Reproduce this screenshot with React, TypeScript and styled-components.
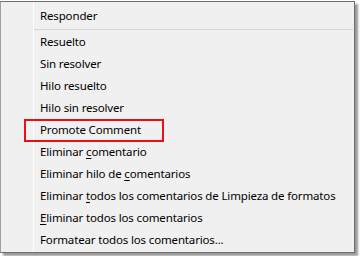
import React from "react";
import styled, { createGlobalStyle } from "styled-components";

const Global = createGlobalStyle`
  html, body { margin: 0; padding: 0; background: #ffffff; }
  body { width: 360px; height: 256px; overflow: hidden; }
`;

const Page = styled.div`
  width: 360px;
  height: 256px;
  padding-top: 1px;
  box-sizing: border-box;
  background: #ffffff;
`;

const Menu = styled.div`
  position: relative;
  width: 355px;
  height: 252px;
  box-sizing: border-box;
  border: 1px solid #6e6e6e;
  border-left-color: #a0a0a0;
  background: linear-gradient(
    to right,
    #f0f0f0 32px,
    #fdfdfd 32px,
    #fdfdfd 33px,
    #f0f0f0 33px
  );
  box-shadow: 3px 3px 2px rgba(0, 0, 0, 0.4);
  padding: 3px 0 1px 0;
  display: flex;
  flex-direction: column;
  font-family: "Segoe UI", "Noto Sans", sans-serif;
  font-size: 11.5px;
  letter-spacing: -0.15px;
  color: #000000;
`;

const Item = styled.div`
  position: relative;
  height: 22px;
  line-height: 22px;
  padding-left: 39px;
  white-space: nowrap;
`;

const Separator = styled.div`
  height: 4px;
  display: flex;
  align-items: center;
  padding-left: 33px;
  padding-right: 1px;
  &::after {
    content: "";
    flex: 1;
    height: 1px;
    background: #d7d7d7;
  }
`;

const Key = styled.span`
  text-decoration: underline;
  text-underline-offset: 2px;
`;

const Highlight = styled.div`
  position: absolute;
  left: 23px;
  top: 0;
  width: 140px;
  height: 23px;
  box-sizing: border-box;
  border: 2px solid #e81010;
`;

export default function App() {
  return (
    <>
      <Global />
      <Page>
        <Menu>
          <Item>Responder</Item>
          <Separator />
          <Item>Resuelto</Item>
          <Item>Sin resolver</Item>
          <Item>Hilo resuelto</Item>
          <Item>Hilo sin resolver</Item>
          <Item>
            Promote Comment
            <Highlight />
          </Item>
          <Item>
            Eliminar <Key>c</Key>omentario
          </Item>
          <Item>
            Eliminar hilo de <Key>c</Key>omentarios
          </Item>
          <Item>
            Eliminar <Key>t</Key>odos los comentarios de Limpieza de formatos
          </Item>
          <Item>
            <Key>E</Key>liminar todos los comentarios
          </Item>
          <Item>Formatear todos los comentarios...</Item>
        </Menu>
      </Page>
    </>
  );
}
